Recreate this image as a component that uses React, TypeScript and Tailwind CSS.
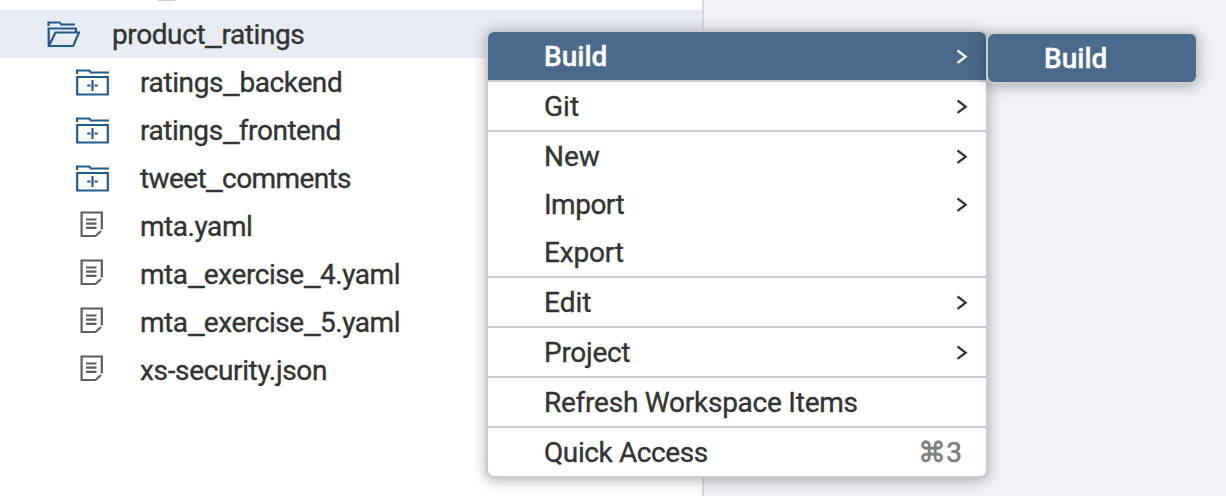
import { Fragment } from "react";

function OpenFolderIcon() {
  return (
    <svg width="34" height="28" viewBox="0 0 34 28" fill="none" stroke="#235a8c" strokeWidth="2.200">
      <path d="M1.500 5V1.500h11l2 2H28" />
      <path d="M29 11.500V7.500H1.700v17.500h24.500L32 11.500H8.500L2 24.500" />
    </svg>
  );
}

function AddFolderIcon() {
  return (
    <svg width="34" height="28" viewBox="0 0 34 28" fill="none" stroke="#235a8c" strokeWidth="2.200">
      <path d="M1 5V1.500h12l2 2h18" />
      <path d="M1.200 8h30.600v17.500H1.200z" />
      <path d="M16.500 11v11M11.200 16.500h3.400M18.400 16.500h3.400" />
    </svg>
  );
}

function DocumentIcon() {
  return (
    <svg width="24" height="28" viewBox="0 0 24 28" fill="none" stroke="#5f5f5f" strokeWidth="2.200">
      <path d="M21.800 19.500V2.500H1.600v23.500H15.500L21 21" />
      <path d="M6 9.500h10.500M6 13.700h10.500M6 17.900h10.500" />
    </svg>
  );
}

function Chevron() {
  return (
    <svg className="mr-px" width="12" height="16" viewBox="0 0 12 16" fill="none" stroke="currentColor" strokeWidth="2.200">
      <path d="M1.500 1.500L9.700 7.700L1.500 13.900" />
    </svg>
  );
}

function FileName({ name, spacing }: { name: string; spacing: string }) {
  return (
    <span className={spacing}>
      {name.split("_").map((part, index) => (
        <Fragment key={index}>
          {index > 0 && (
            <span className="mr-[4px] inline-block origin-left translate-y-0.5 scale-x-[1.320]">_</span>
          )}
          {part}
        </Fragment>
      ))}
    </span>
  );
}

type TreeItem = { name: string; kind: "folder" | "file"; spacing: string };

const treeItems: TreeItem[] = [
  { name: "ratings_backend", kind: "folder", spacing: "tracking-[-0.380px]" },
  { name: "ratings_frontend", kind: "folder", spacing: "tracking-[-0.450px]" },
  { name: "tweet_comments", kind: "folder", spacing: "tracking-[-0.600px]" },
  { name: "mta.yaml", kind: "file", spacing: "tracking-[-0.450px]" },
  { name: "mta_exercise_4.yaml", kind: "file", spacing: "tracking-[-0.430px]" },
  { name: "mta_exercise_5.yaml", kind: "file", spacing: "tracking-[-0.430px]" },
  { name: "xs-security.json", kind: "file", spacing: "tracking-[-0.350px]" },
];

type MenuEntry = { label: string; spacing: string; submenu?: boolean; shortcut?: string };

const menuGroups: MenuEntry[][] = [
  [{ label: "Build", spacing: "tracking-[0px]", submenu: true }],
  [{ label: "Git", spacing: "tracking-[0px]", submenu: true }],
  [
    { label: "New", spacing: "tracking-[0px]", submenu: true },
    { label: "Import", spacing: "tracking-[-0.500px]", submenu: true },
    { label: "Export", spacing: "tracking-[-0.200px]" },
  ],
  [{ label: "Edit", spacing: "tracking-[0px]", submenu: true }],
  [{ label: "Project", spacing: "tracking-[-0.280px]", submenu: true }],
  [{ label: "Refresh Workspace Items", spacing: "tracking-[-0.240px]" }],
  [{ label: "Quick Access", spacing: "tracking-[-0.400px]", shortcut: "⌘3" }],
];

function MenuRow({ entry, active }: { entry: MenuEntry; active: boolean }) {
  return (
    <div className={`flex h-12 items-center justify-between pt-0.5 pr-[17px] pl-14 ${active ? "bg-[#4a6a8b] font-medium text-white" : ""}`}>
      <span className={entry.spacing}>{entry.label}</span>
      {entry.submenu && <Chevron />}
      {entry.shortcut && <span className="mr-[7px] text-[#7f7f7f] [-webkit-text-stroke:0.600px]">{entry.shortcut}</span>}
    </div>
  );
}

export default function App() {
  return (
    <div className="relative flex h-[496px] w-[1226px] overflow-hidden bg-[#eff3f8] font-['Roboto','DejaVu_Sans',sans-serif] text-[28px] leading-[46px] whitespace-nowrap text-[#333] [-webkit-text-stroke:0.350px]">
      <div className="h-full w-[704px] border-r-2 border-[#d5d9df] bg-white">
        <div className="-mt-[38px] h-12 pt-0.5 pl-[158px]">
          <FileName name="_" spacing="tracking-[0px]" />
        </div>
        <div className="flex h-12 items-center bg-[#e8edf5] pt-0.5 pl-[47px]">
          <OpenFolderIcon />
          <div className="ml-[31px]">
            <FileName name="product_ratings" spacing="tracking-[-0.400px]" />
          </div>
        </div>
        {treeItems.map((item) => (
          <div key={item.name} className="flex h-12 items-center pt-0.5 pl-[76px]">
            <div className="flex w-16 items-center">
              {item.kind === "folder" ? (
                <AddFolderIcon />
              ) : (
                <div className="-mt-1.5 ml-1"><DocumentIcon /></div>
              )}
            </div>
            <FileName name={item.name} spacing={item.spacing} />
          </div>
        ))}
      </div>

      <div className="absolute top-[30px] left-[486px] w-[502px] rounded-lg border-2 border-[#ccc] bg-white shadow-[0_2px_14px_rgba(0,0,0,0.320)]">
        <div className="divide-y-2 divide-[#ccc] overflow-hidden rounded-md">
          {menuGroups.map((group, index) => (
            <div key={index}>
              {group.map((entry) => (
                <MenuRow key={entry.label} entry={entry} active={entry.label === "Build"} />
              ))}
            </div>
          ))}
        </div>
      </div>

      <div className="absolute top-8 left-[986px] w-[212px] rounded-lg border-2 border-[#ccc] bg-[#4a6a8b] pl-14 font-medium text-white shadow-[0_2px_14px_rgba(0,0,0,0.320)]">
        <div className="h-12 pt-0.5">Build</div>
      </div>
    </div>
  );
}
